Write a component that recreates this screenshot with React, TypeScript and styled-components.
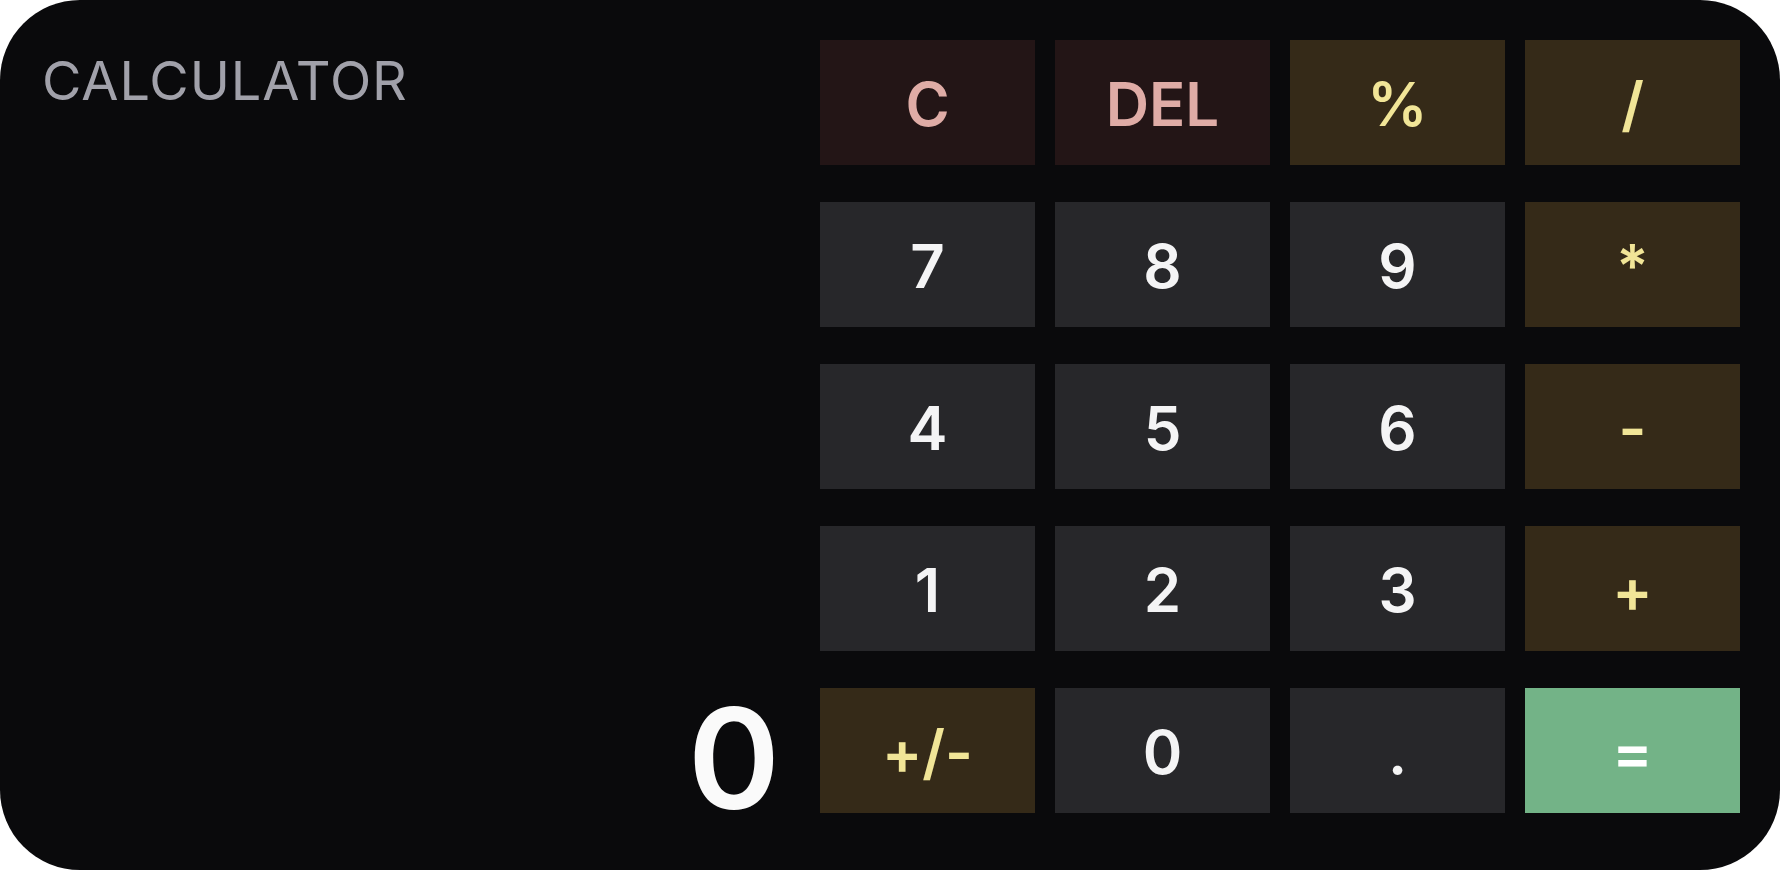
import React from 'react'
import styled, { createGlobalStyle } from 'styled-components'

type Tone = 'digit' | 'danger' | 'operator' | 'equals'

const GlobalStyle = createGlobalStyle`
  html, body {
    margin: 0;
    padding: 0;
    background: #ffffff;
  }
  body {
    font-family: Inter, "Noto Sans", "Liberation Sans", sans-serif;
  }
  * {
    box-sizing: border-box;
  }
`

const tones: Record<Tone, { bg: string; fg: string }> = {
  digit: { bg: '#27272a', fg: '#f4f4f5' },
  danger: { bg: '#231516', fg: '#dfaca6' },
  operator: { bg: '#352a18', fg: '#f1e597' },
  equals: { bg: '#73b387', fg: '#ffffff' },
}

const keys: { label: string; tone: Tone }[] = [
  { label: 'C', tone: 'danger' },
  { label: 'DEL', tone: 'danger' },
  { label: '%', tone: 'operator' },
  { label: '/', tone: 'operator' },
  { label: '7', tone: 'digit' },
  { label: '8', tone: 'digit' },
  { label: '9', tone: 'digit' },
  { label: '*', tone: 'operator' },
  { label: '4', tone: 'digit' },
  { label: '5', tone: 'digit' },
  { label: '6', tone: 'digit' },
  { label: '-', tone: 'operator' },
  { label: '1', tone: 'digit' },
  { label: '2', tone: 'digit' },
  { label: '3', tone: 'digit' },
  { label: '+', tone: 'operator' },
  { label: '+/-', tone: 'operator' },
  { label: '0', tone: 'digit' },
  { label: '.', tone: 'digit' },
  { label: '=', tone: 'equals' },
]

const App: React.FC = () => {
  return (
    <>
      <GlobalStyle />
      <StyledCard>
        <StyledScreen>
          <StyledTitle>CALCULATOR</StyledTitle>
          <StyledDisplay>0</StyledDisplay>
        </StyledScreen>
        <StyledKeypad>
          {keys.map((k) => (
            <StyledKey key={k.label} tone={k.tone}>
              {k.label}
            </StyledKey>
          ))}
        </StyledKeypad>
      </StyledCard>
    </>
  )
}

const StyledCard = styled.div`
  display: flex;
  gap: 40px;
  width: 100%;
  height: 870px;
  padding: 40px 40px 57px 42px;
  background: #0a0a0c;
  border-radius: 80px;
  overflow: hidden;
`

const StyledScreen = styled.div`
  display: flex;
  flex: 1;
  flex-direction: column;
  justify-content: space-between;
  align-items: stretch;
`

const StyledTitle = styled.h1`
  margin: 14px 0 0;
  color: #a1a1aa;
  font-size: 54px;
  font-weight: 400;
  line-height: 1;
  letter-spacing: 0.9px;
`

const StyledDisplay = styled.div`
  color: #fafafa;
  font-size: 140px;
  font-weight: 600;
  line-height: 110px;
  text-align: right;
`

const StyledKeypad = styled.div`
  display: grid;
  width: 920px;
  grid-template-columns: repeat(4, 1fr);
  grid-template-rows: repeat(5, 125px);
  column-gap: 20px;
  row-gap: 37px;
`

const StyledKey = styled.button<{ tone: Tone }>`
  display: flex;
  align-items: center;
  justify-content: center;
  border: none;
  border-radius: 0;
  padding: 2px 0 0;
  background: ${(props) => tones[props.tone].bg};
  color: ${(props) => tones[props.tone].fg};
  font-family: Inter, "Noto Sans", "Liberation Sans", sans-serif;
  font-size: 60px;
  font-weight: 600;
  line-height: 1;
  cursor: pointer;
`

export default App
